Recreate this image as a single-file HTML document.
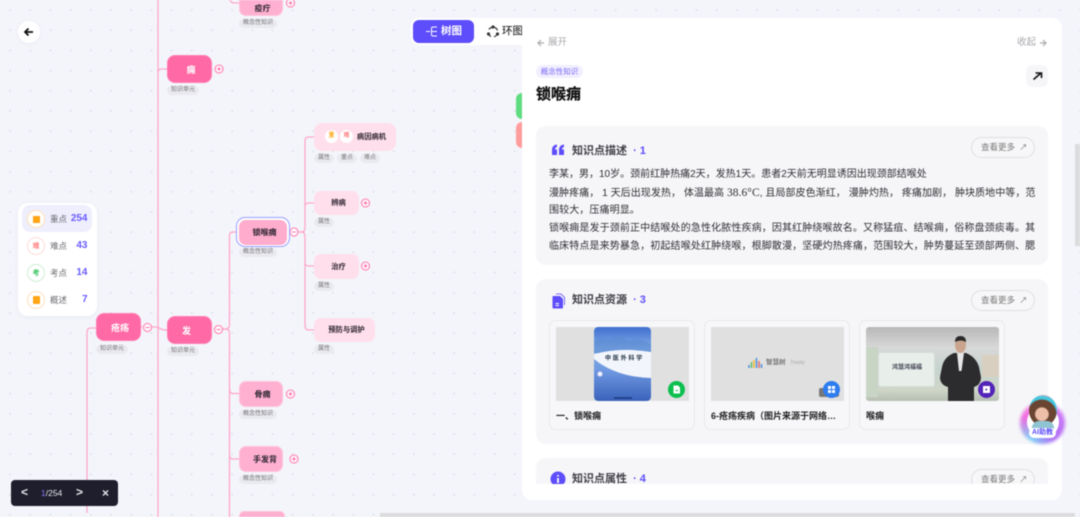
<!DOCTYPE html>
<html lang="zh"><head><meta charset="utf-8"><style>
*{box-sizing:border-box;margin:0;padding:0}
html,body{width:1080px;height:517px;overflow:hidden;background:#f4f5fb}
body{font-family:"Liberation Sans","Noto Sans CJK SC",sans-serif;position:relative;color:#222}
#w{position:absolute;left:0;top:0;width:1080px;height:517px;overflow:hidden;filter:blur(.45px);
background-image:radial-gradient(circle,#d9dbe6 .7px,transparent 1px);background-size:20.2px 20.2px;background-position:0 0}
.a{position:absolute}
.n{position:absolute;display:flex;align-items:center;justify-content:center;font-weight:700;white-space:nowrap;border-radius:7px;color:#2b2430}
.u{background:#ff69a5;color:#fff;font-size:9px;border:1px solid #ff7fb2;padding-left:3px}
.k{background:#ffb0d0;border:1px solid #ffc2da;font-size:8px;padding-left:3px}
.p{background:#ffdfeb;font-size:7.300px;padding-left:4px}
.t{position:absolute;height:9px;line-height:9px;background:#e9e9ef;border-radius:5px;font-size:6px;color:#777;padding:0 4px;white-space:nowrap}
.card{position:absolute;left:14px;width:512px;background:#f6f6f8;border-radius:10px}
.h{position:absolute;left:36px;font-size:11px;font-weight:700;color:#3f3f47;white-space:nowrap;line-height:16px}
.h b{color:#5d4dfa;margin-left:3px}
.more{position:absolute;right:13px;width:64px;height:21px;border:1px solid #dfdfe3;border-radius:11px;font-size:8.500px;color:#777;line-height:19px;padding-left:9px;background:#f7f7f9;white-space:nowrap}
.res{position:absolute;top:41px;width:146px;height:110px;border:1px solid #e9e9ec;border-radius:7px;background:#f7f7f9}
.th{position:absolute;left:6px;top:6px;width:133px;height:74px;background:#e0e0e0;overflow:hidden}
.rt{position:absolute;left:6px;top:89px;width:135px;font-size:9px;line-height:13px;font-weight:700;color:#222;white-space:nowrap}
.bd{position:absolute;left:117.500px;top:59.500px;width:17px;height:17px;border-radius:50%}
.leg{position:absolute;left:4px;width:70px;height:27px;border-radius:8px}
.ci{position:absolute;left:5px;top:5px;width:18px;height:18px;border-radius:50%;background:#fff;display:flex;align-items:center;justify-content:center;font-size:7px;font-weight:700}
.lt{position:absolute;left:28px;top:6.500px;font-size:8.500px;color:#6c6c72;line-height:14px}
.ln{position:absolute;right:4.500px;top:6.500px;font-size:10px;font-weight:700;color:#6a5cff;line-height:14px}
.tx{position:absolute;left:13px;width:490px;font-size:10px;line-height:18px;color:#2f2f35;white-space:nowrap;overflow:hidden}
</style></head><body><div id="w">

<svg class="a" style="left:0;top:0" width="520" height="517" fill="none">
<g stroke="#ffa6c9" stroke-width="1.300">
<path d="M158 0V517"/>
<path d="M158 72Q158 69 162 69H167"/>
<path d="M152 327H155Q158 327 161 329Q163 330 167 330"/>
<path d="M141 327H142"/>
<path d="M96 328H91Q87 328 87 332V513"/>
<path d="M222 329H225Q229.500 329 229.500 325V236Q229.500 232 233 232H239"/>
<path d="M225 329Q229.500 329 229.500 333V517"/>
<path d="M229.500 389Q229.500 393.500 233 393.500H239"/>
<path d="M229.500 455Q229.500 459 233 459H239"/>
<path d="M230 0Q231 3 235 3H239"/>
<path d="M298 232H301Q305 232 305 228V141Q305 137 309 137H314"/>
<path d="M301 232Q305 232 305 236V325Q305 330 309 330H314"/>
<path d="M305 206Q305 203 309 203H314"/>
<path d="M305 263Q305 266 309 266H314"/>
</g>
<g stroke="#ff8fbb" stroke-width="1.300" fill="#fff">
<circle cx="290.500" cy="3" r="4"/><circle cx="219" cy="69" r="4"/><circle cx="365.500" cy="203" r="4"/><circle cx="365.500" cy="266" r="4"/><circle cx="290.500" cy="394" r="4"/><circle cx="294" cy="459" r="4"/>
<circle cx="294" cy="232" r="4"/><circle cx="147.500" cy="327.500" r="4"/><circle cx="218.500" cy="329.500" r="4"/>
</g>
<g stroke="#ff6fa8" stroke-width="1.100">
<path d="M288.500 3h4M290.500 1v4M217 69h4M219 67v4M363.500 203h4M365.500 201v4M363.500 266h4M365.500 264v4M288.500 394h4M290.500 392v4M292 459h4M294 457v4M292 232h4M145.500 327.500h4M216.500 329.500h4"/>
</g>
</svg>

<div class="a" style="left:18px;top:21px;width:22px;height:22px;border-radius:50%;background:#fff;box-shadow:0 1px 4px rgba(60,60,100,.06)">
<svg width="22" height="22" fill="none" stroke="#111" stroke-width="1.800"><path d="M15 11H7.500M10.500 7.500L7 11l3.500 3.500"/></svg></div>

<div class="n k" style="left:239px;top:-10px;width:44px;height:26px;padding-top:10px">疫疔</div><div class="t" style="left:239px;top:19px">概念性知识</div>
<div class="n u" style="left:167px;top:55px;width:45px;height:28px;border-radius:8px">痈</div><div class="t" style="left:167px;top:86px">知识单元</div>
<div class="n p" style="left:314px;top:123px;width:82px;height:28px;border-radius:8px;padding-left:33px">病因病机</div>
<div class="a" style="left:325px;top:130px;width:13px;height:13px;border-radius:50%;background:#fff;color:#ffa514;font-size:6px;font-weight:700;text-align:center;line-height:13px">重</div>
<div class="a" style="left:340px;top:130px;width:13px;height:13px;border-radius:50%;background:#fff;color:#ff8080;font-size:6px;font-weight:700;text-align:center;line-height:13px">难</div>
<div class="t" style="left:314px;top:154px">属性</div><div class="t" style="left:337px;top:154px">重点</div><div class="t" style="left:360px;top:154px">难点</div>
<div class="n p" style="left:314px;top:191px;width:45px;height:24px">辨病</div><div class="t" style="left:314px;top:218px">属性</div>
<div class="n p" style="left:314px;top:254px;width:45px;height:25px">治疗</div><div class="t" style="left:314px;top:282px">属性</div>
<div class="n p" style="left:314px;top:318px;width:61px;height:24px">预防与调护</div><div class="t" style="left:314px;top:345px">属性</div>
<div class="a" style="left:236px;top:217px;width:54px;height:30px;border:1.200px solid #9aa0ff;border-radius:9px;background:#fff"></div>
<div class="n k" style="left:239px;top:219.500px;width:48px;height:25px;background:#ffaccd;border:0">锁喉痈</div><div class="t" style="left:239px;top:248px">概念性知识</div>
<div class="n u" style="left:96px;top:313px;width:45px;height:28px;border-radius:8px">疮疡</div><div class="t" style="left:96px;top:345px">知识单元</div>
<div class="n u" style="left:167px;top:316px;width:45px;height:28px;border-radius:8px;padding-left:0;padding-right:6px">发</div><div class="t" style="left:167px;top:347px">知识单元</div>
<div class="n k" style="left:239px;top:381px;width:44px;height:26px">骨痈</div><div class="t" style="left:239px;top:410px">概念性知识</div>
<div class="n k" style="left:239px;top:446px;width:44px;height:26px;padding-left:8px">手发背</div><div class="t" style="left:239px;top:475px">概念性知识</div>
<div class="n k" style="left:239px;top:511px;width:46px;height:10px"></div>

<div class="a" style="left:18px;top:203px;width:79px;height:113px;background:#fff;border-radius:10px;box-shadow:0 1px 6px rgba(60,60,100,.05)">
<div class="leg" style="top:2px;background:#efeefd"><div class="ci" style="border:1px solid #ffe3b8;color:#ffa514"><span style="width:7px;height:7px;background:#ffa514"></span></div><span class="lt">重点</span><span class="ln">254</span></div>
<div class="leg" style="top:29px"><div class="ci" style="border:1px solid #ffdcdc;color:#ff8080">难</div><span class="lt">难点</span><span class="ln">43</span></div>
<div class="leg" style="top:56px"><div class="ci" style="border:1px solid #cdeed4;color:#2fc257">考</div><span class="lt">考点</span><span class="ln">14</span></div>
<div class="leg" style="top:83px"><div class="ci" style="border:1px solid #ffe3b8"><span style="width:7px;height:8px;background:#ffa514;border-radius:1px"></span></div><span class="lt">概述</span><span class="ln">7</span></div>
</div>

<div class="a" style="left:11px;top:480px;width:107px;height:26px;background:#1f1e2c;border-radius:4px;color:#e8e8ee">
<span class="a" style="left:10px;top:5px;font-size:12px;font-weight:700;line-height:15px">&lt;</span>
<span class="a" style="left:30px;top:6px;font-size:8.500px;line-height:14px"><span style="color:#8477ff">1</span>/254</span>
<span class="a" style="left:65px;top:5px;font-size:12px;font-weight:700;line-height:15px">&gt;</span>
<span class="a" style="left:91px;top:6px;font-size:12px;font-weight:700;line-height:15px">×</span>
</div>

<div class="a" style="left:411px;top:18px;width:120px;height:27px;background:#fff;border-radius:8px"></div>
<div class="a" style="left:413px;top:20px;width:61px;height:23px;background:#5d4dfa;border-radius:6px;color:#fff;font-size:10.500px;font-weight:700;line-height:23px;padding-left:28px">树图
<svg class="a" style="left:12px;top:5px" width="14" height="13" fill="none" stroke="#fff" stroke-width="1"><path d="M1 6.500H5M12 2H8Q6.500 2 6.500 3.500V9.500Q6.500 11 8 11H12M6.500 6.500H12"/></svg></div>
<svg class="a" style="left:486px;top:25px" width="14" height="14" fill="none" stroke="#333" stroke-width="1.200"><path d="M3 4.500A5 5 0 0 1 6 2.200M8.500 2.300A5 5 0 0 1 11.500 5.500M11.500 8.500A5 5 0 0 1 8 11.800M5 11.500A5 5 0 0 1 2.200 8"/><circle cx="7" cy="2" r="1" fill="#333"/><circle cx="2.500" cy="9" r="1" fill="#333"/><circle cx="11.500" cy="9" r="1" fill="#333"/></svg>
<span class="a" style="left:502px;top:24px;font-size:10.500px;line-height:15px;color:#333;font-weight:500">环图</span>
<div class="a" style="left:516px;top:93px;width:12px;height:26px;background:#60dc80;border-radius:6px"></div>
<div class="a" style="left:516px;top:122px;width:12px;height:26px;background:#ff9d9d;border-radius:6px"></div>

<div class="a" style="left:522px;top:18px;width:540px;height:482px;background:#fff;border-radius:0 10px 10px 10px;overflow:hidden">
<svg class="a" style="left:15px;top:21px" width="8" height="8" fill="none" stroke="#aaa" stroke-width="1.200"><path d="M7 4H1M4 1L1 4l3 3"/></svg>
<span class="a" style="left:26px;top:18px;font-size:9.500px;color:#a8a8ae;line-height:14px">展开</span>
<span class="a" style="left:495px;top:18px;font-size:9.500px;color:#a8a8ae;line-height:14px">收起</span>
<svg class="a" style="left:517px;top:21px" width="8" height="8" fill="none" stroke="#aaa" stroke-width="1.200"><path d="M1 4H7M4 1L7 4 4 7"/></svg>
<div class="a" style="left:14px;top:47px;width:47px;height:13px;border-radius:7px;background:#f1efff;color:#7a68f5;font-size:7.500px;line-height:13px;text-align:center">概念性知识</div>
<div class="a" style="left:14px;top:65px;font-size:15px;font-weight:700;color:#111;line-height:23px;-webkit-text-stroke:.25px #111">锁喉痈</div>
<div class="a" style="left:504px;top:47px;width:22px;height:22px;background:#f6f6f8;border-radius:6px">
<svg width="22" height="22" fill="none" stroke="#111" stroke-width="1.600"><path d="M7.500 14.500L15 8M9.500 8H15.500V13"/></svg></div>

<div class="card" style="top:108px;height:139px">
<svg class="a" style="left:15px;top:17px" width="14" height="14" fill="#5d4dfa"><path d="M1 12V7Q1 2 6 1.500V4Q4 4.500 4 6.500H6V12ZM8 12V7Q8 2 13 1.500V4Q11 4.500 11 6.500H13V12Z"/></svg>
<div class="h" style="top:16.500px">知识点描述 <b>· 1</b></div>
<div class="more" style="top:11px">查看更多 <span style="font-size:8px;margin-left:2px">↗</span></div>
<div class="tx" style="top:39.500px">李某，男，10岁。颈前红肿热痛2天，发热1天。患者2天前无明显诱因出现颈部结喉处</div>
<div class="tx" style="top:57.500px;letter-spacing:.06px">漫肿疼痛， 1 天后出现发热， 体温最高 <span style="font-family:'Liberation Serif',serif;font-size:11.500px">38.6°C</span>, 且局部皮色渐红， 漫肿灼热， 疼痛加剧， 肿块质地中等，范</div>
<div class="tx" style="top:75.500px;letter-spacing:.1px">围较大，压痛明显。</div>
<div class="tx" style="top:93.500px;letter-spacing:.13px">锁喉痈是发于颈前正中结喉处的急性化脓性疾病，因其红肿绕喉故名。又称猛疽、结喉痈，俗称盘颈痰毒。其</div>
<div class="tx" style="top:111.500px;letter-spacing:.13px">临床特点是来势暴急，初起结喉处红肿绕喉，根脚散漫，坚硬灼热疼痛，范围较大，肿势蔓延至颈部两侧、腮</div>
</div>

<div class="card" style="top:261px;height:165px">
<svg class="a" style="left:15px;top:14px" width="14" height="16" fill="#5d4dfa"><path d="M2.500 3H9L12 6V14.500Q12 15.500 11 15.500H2.500Q1.500 15.500 1.500 14.500V4Q1.500 3 2.500 3Z"/><path d="M5 1H10L13.500 4.500V12" fill="none" stroke="#7a6cfa"/><path d="M4.500 10.500H8M4.500 12.500H8" stroke="#fff"/></svg>
<div class="h" style="top:13px">知识点资源 <b>· 3</b></div>
<div class="more" style="top:11px">查看更多 <span style="font-size:8px;margin-left:2px">↗</span></div>

<div class="res" style="left:13px">
<div class="th"><svg class="a" style="left:38px;top:0;border-radius:4px" width="57" height="74">
<defs><linearGradient id="g" x1="0" y1="0" x2="0" y2="1"><stop offset="0" stop-color="#3f6fd0"/><stop offset=".3" stop-color="#86aee6"/><stop offset=".6" stop-color="#6d97e0"/><stop offset="1" stop-color="#3a62ba"/></linearGradient></defs>
<rect width="57" height="74" rx="4" fill="url(#g)"/>
<path d="M0 14L8 10L14 13L24 9L34 14L44 12L57 17V26H0Z" fill="#5a8bd0" opacity=".6"/>
<path d="M0 27Q28 20 57 25V51Q22 50 0 32Z" fill="#f2f5fb"/>
<text x="11" y="33" font-size="6" font-weight="700" fill="#234" letter-spacing="1.800">中医外科学</text>
<circle cx="6" cy="47" r="3" fill="#eef" stroke="#6d8fd8"/>
<path d="M20 71H38" stroke="#1c3a80" stroke-width="1.500"/></svg></div>
<div class="bd" style="background:#0dbf4f"><svg width="17" height="17" fill="#fff"><path d="M5.500 4.500H10L12 6.500V12.500H5.500Z"/><path d="M7.500 9.500H10" stroke="#0dbf4f"/></svg></div>
<div class="rt">一、锁喉痈</div></div>

<div class="res" style="left:168px">
<div class="th"><svg class="a" style="left:37px;top:30px" width="60" height="14"><g stroke-width="1.500"><path d="M1 11V8" stroke="#4a90e2"/><path d="M3.500 11V5" stroke="#5bbf6a"/><path d="M6 11V3" stroke="#f2b632"/><path d="M8.500 11V1" stroke="#4a90e2"/><path d="M11 11V4" stroke="#e26a6a"/><path d="M13.500 11V7" stroke="#4a90e2"/></g></svg>
<span class="a" style="left:55px;top:30px;font-size:6.500px;color:#777;white-space:nowrap;line-height:12px;font-weight:700">智慧树</span>
<span class="a" style="left:79px;top:31px;font-size:5px;color:#aaa;line-height:10px;font-style:italic">Treeity</span>
<div class="a" style="left:108px;top:61px;width:20px;height:9px;background:#777;border-radius:2px"></div></div>
<div class="bd" style="background:#2d7cf0"><svg width="17" height="17" fill="#fff"><rect x="5" y="5" width="3" height="3"/><rect x="9" y="5" width="3" height="3"/><rect x="5" y="9" width="3" height="3"/><rect x="9" y="9" width="3" height="3"/></svg></div>
<div class="rt">6-疮疡疾病（图片来源于网络…</div></div>

<div class="res" style="left:323px">
<div class="th" style="background:linear-gradient(#b8b8b8,#d8d8d8 28%,#c6d4cf 55%,#cfd6c8 85%,#b6c0b4);border-radius:3px">
<div class="a" style="left:0;top:20px;width:12px;height:50px;background:#c8d4c4"></div>
<div class="a" style="left:116px;top:28px;width:17px;height:22px;background:#d9cfc0"></div>
<div class="a" style="left:12px;top:25px;width:57px;height:35px;background:#e8eeea;border:1px solid #d3ddd8;border-radius:3px"></div>
<span class="a" style="left:26px;top:36px;font-size:6px;color:#445;white-space:nowrap;line-height:10px;font-weight:700">鸿慧鸿福福</span>
<svg class="a" style="left:0;top:0" width="133" height="74"><path d="M88 26Q78 30 76 40L74 50Q74 58 82 60V74H108V60Q115 58 115 50L113 40Q110 30 100 26Z" fill="#2c2c2e"/><path d="M91 26H98L95.500 44H93Z" fill="#e6e6e6"/><ellipse cx="94.500" cy="18" rx="5.500" ry="8" fill="#c9a58e"/><path d="M89 15Q89 9 94.500 9T100 15Q95 12 89 15Z" fill="#2a2a2a"/></svg>
</div>
<div class="bd" style="background:#5224b8"><svg width="17" height="17" fill="#fff"><path d="M5 5H12V12H5Z"/><path d="M7.500 7.200V9.800L9.800 8.500Z" fill="#5224b8"/></svg></div>
<div class="rt">喉痈</div></div>
</div>

<div class="card" style="top:440px;height:60px">
<svg class="a" style="left:14px;top:13px" width="16" height="16"><circle cx="8" cy="8" r="7.500" fill="#5d4dfa"/><path d="M8 4V5.500M8 7V12" stroke="#fff" stroke-width="1.800"/></svg>
<div class="h" style="top:13px">知识点属性 <b>· 4</b></div>
<div class="more" style="top:11px">查看更多 <span style="font-size:8px;margin-left:2px">↗</span></div>
</div>
<div class="a" style="left:0;top:466px;width:540px;height:16px;background:#fff"></div>
</div>

<div class="a" style="left:1020px;top:402px;width:45px;height:42px;border-radius:50%;background:conic-gradient(#f8a0ea,#c878f5,#b06cf5,#7fd0f5,#f06ce0,#f8a0ea);filter:blur(1.500px)"></div>
<div class="a" style="left:1027px;top:406px;width:32px;height:32px;border-radius:50%;background:#fff"></div>
<div class="a" style="left:1029px;top:395px;width:28px;height:31px;border-radius:50%;background:radial-gradient(circle at 46% 62%,#eebfa8 0 26%,#6a4632 30% 58%,#45c8e0 62% 72%,#a8b4c0 76%)"></div>
<div class="a" style="left:1032px;top:421px;width:22px;height:9px;background:#8fc4d2;border-radius:7px 7px 2px 2px"></div>
<div class="a" style="left:1029px;top:428px;width:27px;height:10px;border-radius:5px;background:#fff;color:#5d4dfa;font-size:7px;font-weight:700;text-align:center;line-height:10px;white-space:nowrap">AI助教</div>

<div class="a" style="left:1075px;top:144px;width:5px;height:102px;background:#dcdcdc"></div>
<div class="a" style="left:380px;top:513px;width:695px;height:4px;background:#dcdcdc"></div>
</div></body></html>
